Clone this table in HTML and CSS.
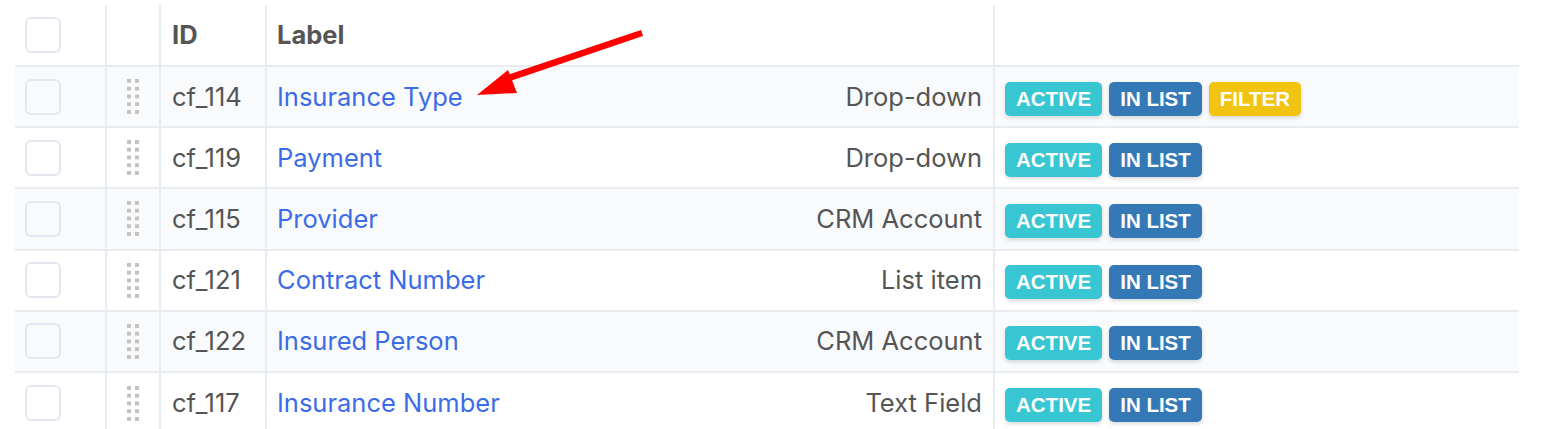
FILE: index.html
```html
<!DOCTYPE html>
<html>
<head>
<meta charset="utf-8">
<link rel="stylesheet" href="styles.css">
</head>
<body>
<div class="wrap">
<table class="grid">
  <colgroup>
    <col class="c-check"><col class="c-drag"><col class="c-id"><col class="c-label"><col class="c-badges">
  </colgroup>
  <thead>
    <tr>
      <th class="check"><span class="box"></span></th>
      <th></th>
      <th class="id">ID</th>
      <th class="label">Label</th>
      <th></th>
    </tr>
  </thead>
  <tbody>
    <tr class="odd">
      <td class="check"><span class="box"></span></td>
      <td class="drag"><span class="handle"></span></td>
      <td class="id">cf_114</td>
      <td class="label"><div class="lbl"><a href="#">Insurance Type</a><span class="type">Drop-down</span></div></td>
      <td class="badges"><span class="badge active">ACTIVE</span><span class="badge inlist">IN LIST</span><span class="badge filter">FILTER</span></td>
    </tr>
    <tr>
      <td class="check"><span class="box"></span></td>
      <td class="drag"><span class="handle"></span></td>
      <td class="id">cf_119</td>
      <td class="label"><div class="lbl"><a href="#">Payment</a><span class="type">Drop-down</span></div></td>
      <td class="badges"><span class="badge active">ACTIVE</span><span class="badge inlist">IN LIST</span></td>
    </tr>
    <tr class="odd">
      <td class="check"><span class="box"></span></td>
      <td class="drag"><span class="handle"></span></td>
      <td class="id">cf_115</td>
      <td class="label"><div class="lbl"><a href="#">Provider</a><span class="type">CRM Account</span></div></td>
      <td class="badges"><span class="badge active">ACTIVE</span><span class="badge inlist">IN LIST</span></td>
    </tr>
    <tr>
      <td class="check"><span class="box"></span></td>
      <td class="drag"><span class="handle"></span></td>
      <td class="id">cf_121</td>
      <td class="label"><div class="lbl"><a href="#">Contract Number</a><span class="type">List item</span></div></td>
      <td class="badges"><span class="badge active">ACTIVE</span><span class="badge inlist">IN LIST</span></td>
    </tr>
    <tr class="odd">
      <td class="check"><span class="box"></span></td>
      <td class="drag"><span class="handle"></span></td>
      <td class="id">cf_122</td>
      <td class="label"><div class="lbl"><a href="#">Insured Person</a><span class="type">CRM Account</span></div></td>
      <td class="badges"><span class="badge active">ACTIVE</span><span class="badge inlist">IN LIST</span></td>
    </tr>
    <tr class="last">
      <td class="check"><span class="box"></span></td>
      <td class="drag"><span class="handle"></span></td>
      <td class="id">cf_117</td>
      <td class="label"><div class="lbl"><a href="#">Insurance Number</a><span class="type">Text Field</span></div></td>
      <td class="badges"><span class="badge active">ACTIVE</span><span class="badge inlist">IN LIST</span></td>
    </tr>
  </tbody>
</table>
<svg class="arrow" width="220" height="100" viewBox="0 0 220 100">
  <line x1="202" y1="31" x2="60" y2="79" stroke="#ff0000" stroke-width="6.5" stroke-linecap="butt"/>
  <polygon points="37,93 68,68 77,91" fill="#ff0000"/>
</svg>
</div>
</body>
</html>
```

FILE: styles.css
```css
html, body {
  margin: 0;
  padding: 0;
  background: #ffffff;
}
body {
  font-family: Inter, "Noto Sans", "Liberation Sans", sans-serif;
  color: #555555;
}
.wrap {
  position: relative;
  padding: 5px 48px 0 15px;
}
.grid {
  width: 1504px;
  border-collapse: collapse;
  table-layout: fixed;
}
.c-check { width: 91px; }
.c-drag { width: 54px; }
.c-id { width: 106px; }
.c-label { width: 728px; }
.c-badges { width: 525px; }

.grid th, .grid td {
  height: 59.2px;
  padding: 0;
  border-left: 2px solid #e8ebf0;
  border-bottom: 2px solid #e8ebf0;
  vertical-align: middle;
  text-align: left;
  font-size: 25.5px;
  line-height: 30px;
  white-space: nowrap;
}
.grid th { height: 60px; }
.grid tr > :first-child { border-left: none; }
.grid tr.last td { border-bottom: none; height: 61px; }
.grid th {
  font-weight: 700;
  color: #555555;
}
.grid tr.odd td { background: #f9fafc; }

.check { padding-left: 10px !important; }
.box {
  display: block;
  width: 32px;
  height: 32px;
  border: 2px solid #e4e7ef;
  border-radius: 6px;
  background: #ffffff;
}
.grid tr.odd .box { background: #f9fafc; }

.drag { text-align: center !important; }
.handle {
  display: inline-block;
  width: 12px;
  height: 35px;
  vertical-align: middle;
  background: linear-gradient(90deg, #c2c2c2 0 4px, transparent 4px 8px, #c2c2c2 8px 12px);
  -webkit-mask: linear-gradient(#000 0 4px, transparent 4px 7.75px) 0 0 / 12px 7.75px repeat-y;
  mask: linear-gradient(#000 0 4px, transparent 4px 7.75px) 0 0 / 12px 7.75px repeat-y;
}

.id { padding-left: 11px !important; }
.label { padding: 0 11px 0 10px !important; }
.lbl {
  display: flex;
  justify-content: space-between;
  align-items: center;
}
.lbl a {
  color: #3b6ce6;
  text-decoration: none;
}
.type { color: #555555; }

.badges { padding-left: 10px !important; }
.badge {
  display: inline-block;
  height: 34px;
  line-height: 34px;
  padding: 0 11px;
  margin: 4px 7px 0 0;
  border-radius: 5px;
  font-family: "Liberation Sans", Arial, sans-serif;
  font-weight: 700;
  font-size: 20.5px;
  color: #ffffff;
  vertical-align: middle;
  box-shadow: 0 2px 4px rgba(0, 0, 0, 0.15);
}
.active { background: #38c6d3; }
.inlist { background: #3479b6; }
.filter { background: #f1c412; }

.arrow {
  position: absolute;
  left: 440px;
  top: 2px;
}
```
